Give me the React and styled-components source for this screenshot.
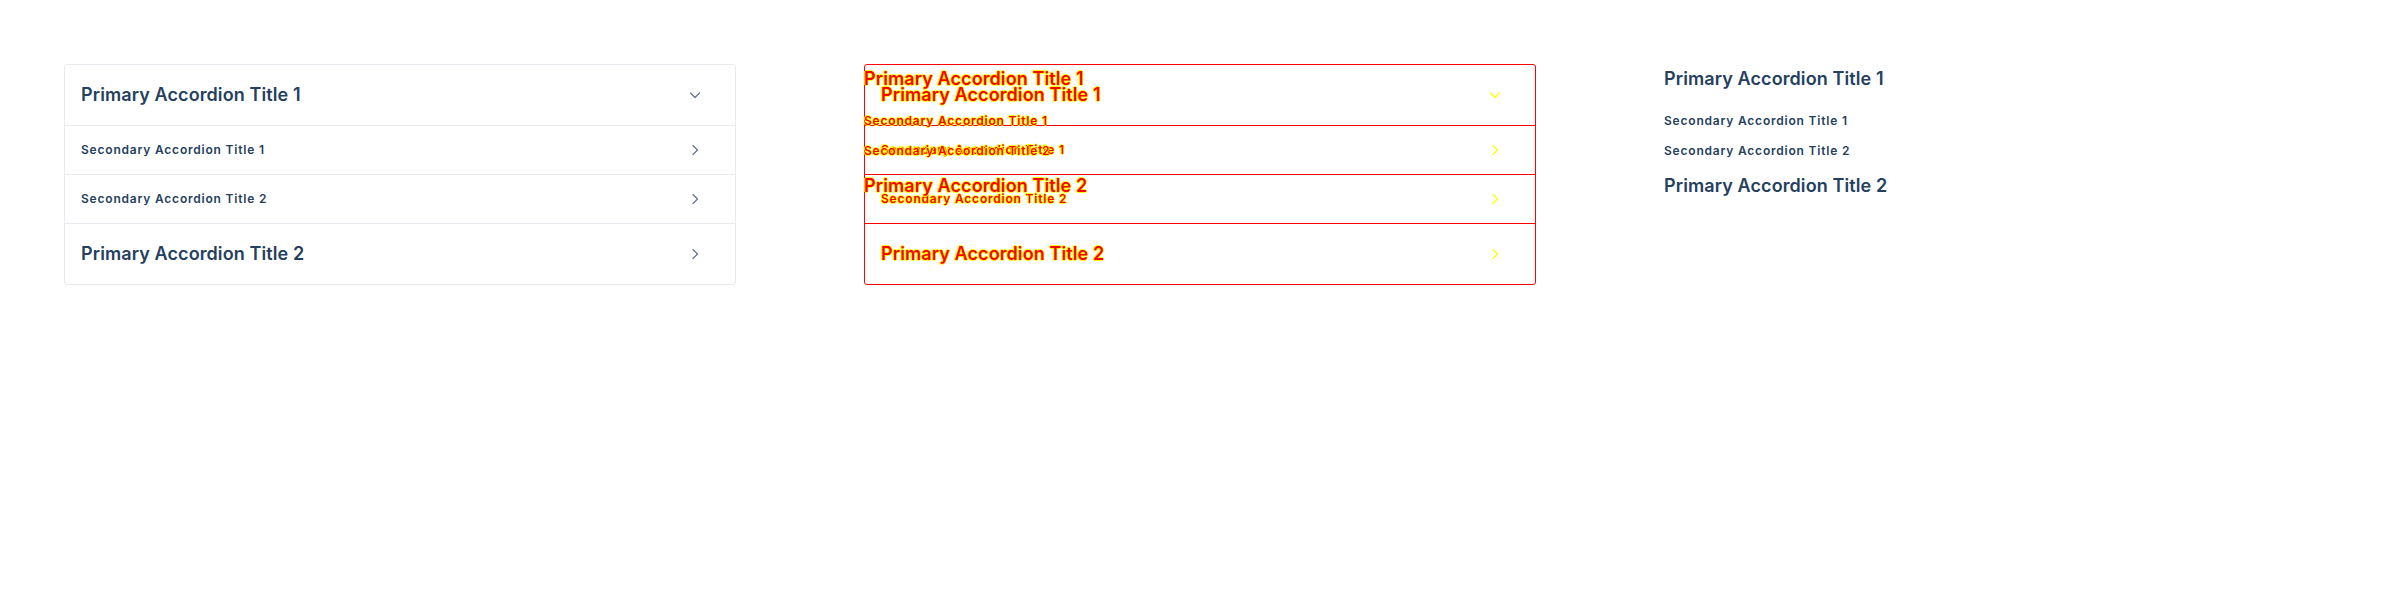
import React from 'react'
import styled, { createGlobalStyle, css } from 'styled-components'

const GlobalStyle = createGlobalStyle`
  html, body {
    margin: 0;
    padding: 0;
    background: #ffffff;
  }
  body {
    font-family: Inter, Roboto, "Liberation Sans", sans-serif;
    -webkit-font-smoothing: antialiased;
  }
`

const INK = '#253f5e'
const LINE = '#e7eaee'

// red fill + yellow fringe, like a pixel diff overlay
const debugText = css`
  color: #ff0000;
  text-shadow: 1px 0 0 #ffff00, -1px 0 0 #ffff00, 0 1px 0 #ffff00, 0 -1px 0 #ffff00;
`

const items = [
  { title: 'Primary Accordion Title 1', open: true, children: ['Secondary Accordion Title 1', 'Secondary Accordion Title 2'] },
  { title: 'Primary Accordion Title 2', open: false, children: [] }
]

const Page = styled.div`
  display: grid;
  grid-template-columns: repeat(3, 800px);
`

const Cell = styled.div`
  position: relative;
  padding: 64px;
`

const Panel = styled.div`
  border: 1px solid ${p => (p.$debug ? '#ff0000' : LINE)};
  border-radius: 3px;
`

const Row = styled.div`
  display: flex;
  align-items: center;
  justify-content: space-between;
  height: ${p => (p.$primary ? '60px' : '48px')};
  padding: 0 32px 0 16px;
  border-bottom: 1px solid ${p => (p.$debug ? '#ff0000' : LINE)};
  &:last-child {
    border-bottom: none;
  }
`

const PrimaryTitle = styled.h3`
  margin: 0;
  font-size: 18px;
  line-height: 28px;
  font-weight: 600;
  letter-spacing: 0.1px;
  color: ${INK};
  ${p => p.$debug && debugText}
`

const SecondaryTitle = styled.h4`
  margin: 0;
  font-size: 12px;
  line-height: 20px;
  font-weight: 600;
  letter-spacing: 0.8px;
  color: ${INK};
  ${p => p.$debug && debugText}
`

const Outline = styled.div`
  display: flex;
  flex-direction: column;
  padding-top: 1px;
  ${p =>
    p.$overlay &&
    css`
      position: absolute;
      top: 64px;
      left: 64px;
    `}
`

const SubList = styled.div`
  display: flex;
  flex-direction: column;
  gap: 10px;
  margin: 18px 0 11px;
`

const Chevron = ({ dir, debug }) => (
  <svg width="16" height="16" viewBox="0 0 16 16" fill="none">
    <path
      d={dir === 'down' ? 'M3.5 6 L8 10.5 L12.5 6' : 'M6 3.5 L10.5 8 L6 12.5'}
      stroke={debug ? '#ffff00' : '#62748f'}
      strokeWidth="1.2"
      strokeLinecap="round"
      strokeLinejoin="round"
    />
  </svg>
)

const Accordion = ({ debug }) => (
  <Panel $debug={debug}>
    {items.map(item => (
      <React.Fragment key={item.title}>
        <Row $primary $debug={debug}>
          <PrimaryTitle $debug={debug}>{item.title}</PrimaryTitle>
          <Chevron dir={item.open ? 'down' : 'right'} debug={debug} />
        </Row>
        {item.open &&
          item.children.map(child => (
            <Row key={child} $debug={debug}>
              <SecondaryTitle $debug={debug}>{child}</SecondaryTitle>
              <Chevron dir="right" debug={debug} />
            </Row>
          ))}
      </React.Fragment>
    ))}
  </Panel>
)

const Plain = ({ debug, overlay }) => (
  <Outline $overlay={overlay}>
    {items.map(item => (
      <React.Fragment key={item.title}>
        <PrimaryTitle $debug={debug}>{item.title}</PrimaryTitle>
        {item.children.length > 0 && (
          <SubList>
            {item.children.map(child => (
              <SecondaryTitle key={child} $debug={debug}>
                {child}
              </SecondaryTitle>
            ))}
          </SubList>
        )}
      </React.Fragment>
    ))}
  </Outline>
)

export default function App() {
  return (
    <>
      <GlobalStyle />
      <Page>
        <Cell>
          <Accordion />
        </Cell>
        <Cell>
          <Accordion debug />
          <Plain debug overlay />
        </Cell>
        <Cell>
          <Plain />
        </Cell>
      </Page>
    </>
  )
}
